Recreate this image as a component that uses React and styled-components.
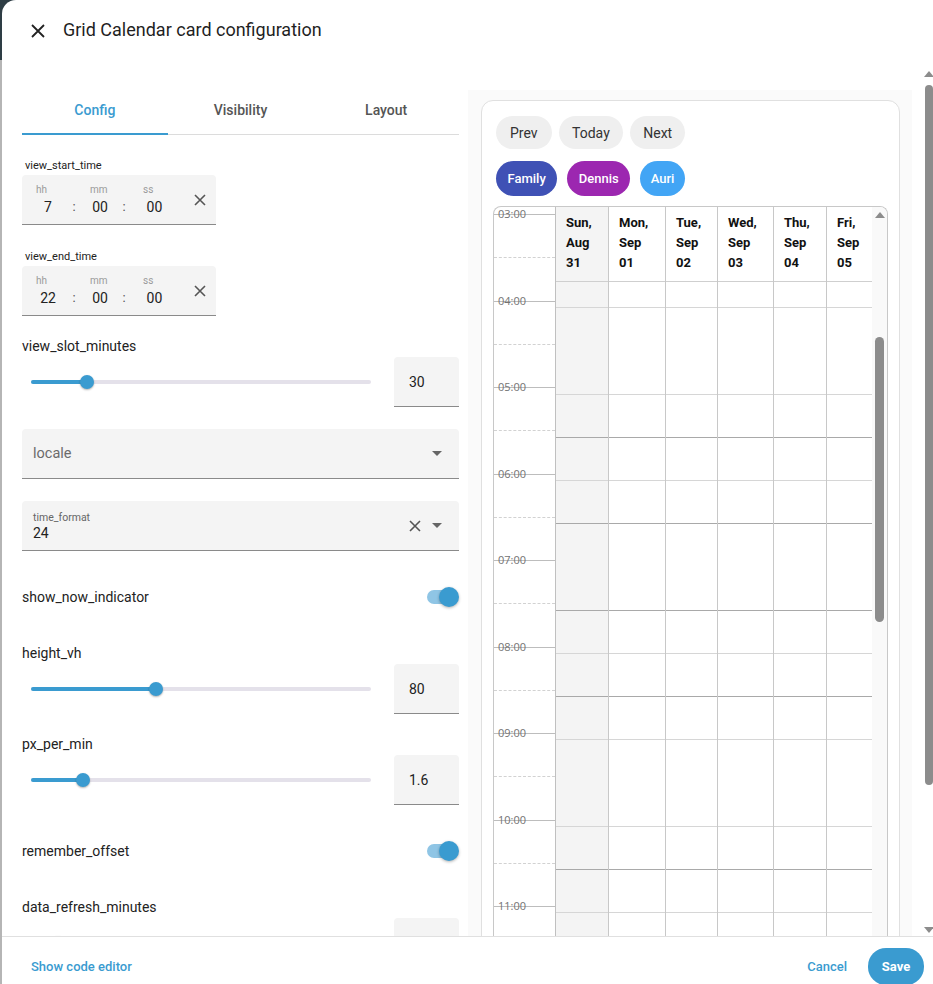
import { createGlobalStyle } from 'styled-components';
import styled from 'styled-components';

const primary = '#3a9bd0';

const GlobalStyle = createGlobalStyle`
  body {
    margin: 0;
    font-family: Roboto, 'Liberation Sans', sans-serif;
    background: linear-gradient(to bottom, #2e3d45 0, #2e3d45 60px, #b5b5b5 60px);
  }
  * { box-sizing: border-box; }
`;

const Dialog = styled.div`
  margin-left: 2px;
  height: 984px;
  background: #fff;
  border-top-left-radius: 14px;
  display: flex;
  flex-direction: column;
  overflow: hidden;
`;

const Header = styled.div`
  height: 62px;
  padding: 0 0 4px 29px;
  display: flex;
  align-items: center;
  flex-shrink: 0;
`;

const CloseIcon = styled.svg`
  margin-top: 4px;
  margin-right: 18px;
`;

const Title = styled.div`
  font-size: 18px;
  color: #1f1f1f;
`;

const Body = styled.div`
  flex: 1;
  display: flex;
  overflow: hidden;
  padding-left: 20px;
`;

const LeftPanel = styled.div`
  width: 437px;
  flex-shrink: 0;
  padding-top: 25px;
  display: flex;
  flex-direction: column;
  & > * {
    flex-shrink: 0;
  }
`;

const Tabs = styled.div`
  display: flex;
  height: 48px;
  border-bottom: 1px solid #dcdcdc;
`;

const Tab = styled.div`
  flex: 1;
  display: flex;
  align-items: center;
  justify-content: center;
  font-size: 14px;
  font-weight: 500;
  color: ${({ active }) => (active ? primary : '#555')};
  border-bottom: 2px solid ${({ active }) => (active ? primary : 'transparent')};
  margin-bottom: -1px;
`;

const SmallLabel = styled.div`
  font-size: 11px;
  line-height: 13px;
  color: #222;
  padding-left: 3px;
  margin-top: ${({ mt }) => mt}px;
`;

const Label = styled.div`
  font-size: 14px;
  line-height: 16px;
  color: #222;
  margin-top: ${({ mt }) => mt}px;
`;

const TimeBox = styled.div`
  width: 194px;
  height: 50px;
  margin-top: 3px;
  background: #f4f4f4;
  border-radius: 4px 4px 0 0;
  border-bottom: 1px solid #8a8a8a;
  display: flex;
  padding-left: 14px;
`;

const Segment = styled.div`
  width: ${({ w }) => w}px;
  padding-top: 9px;
  display: flex;
  flex-direction: column;
`;

const SegLabel = styled.div`
  font-size: 10px;
  line-height: 12px;
  color: #9a9a9a;
  padding-left: ${({ pl }) => pl || 0}px;
`;

const SegValue = styled.div`
  font-size: 14px;
  line-height: 16px;
  margin-top: 3px;
  color: #222;
  text-align: center;
`;

const Colon = styled.div`
  width: ${({ w }) => w}px;
  padding-top: 24px;
  font-size: 13px;
  line-height: 16px;
  color: #555;
  text-align: center;
`;

const ClearButton = styled.div`
  margin-left: auto;
  width: 32px;
  display: flex;
  align-items: center;
  justify-content: center;
`;

const SliderRow = styled.div`
  display: flex;
  align-items: center;
  height: 50px;
  margin-top: 3px;
`;

const Track = styled.div`
  position: relative;
  width: 340px;
  height: 4px;
  margin-left: 9px;
  border-radius: 2px;
  background: #e4e1ea;
`;

const Fill = styled.div`
  height: 100%;
  border-radius: 2px;
  background: ${primary};
`;

const Thumb = styled.div`
  position: absolute;
  top: -5px;
  width: 14px;
  height: 14px;
  margin-left: -7px;
  border-radius: 50%;
  background: ${primary};
  box-shadow: 0 1px 2px rgba(0, 0, 0, 0.3);
`;

const NumberBox = styled.div`
  margin-left: auto;
  width: 65px;
  height: 50px;
  background: #f4f4f4;
  border-radius: 4px 4px 0 0;
  border-bottom: 1px solid #8a8a8a;
  display: flex;
  align-items: center;
  padding-left: 15px;
  font-size: 14px;
  color: #222;
`;

const SelectBox = styled.div`
  height: 50px;
  margin-top: 22px;
  background: #f4f4f4;
  border-radius: 4px 4px 0 0;
  border-bottom: 1px solid #8a8a8a;
  display: flex;
  align-items: center;
  padding: 0 17px 0 11px;
`;

const Placeholder = styled.div`
  font-size: 14.5px;
  color: #6b6b6b;
`;

const SelectValue = styled.div`
  display: flex;
  flex-direction: column;
  padding-top: 2px;
`;

const SelectLabel = styled.div`
  font-size: 10.5px;
  line-height: 13px;
  color: #666;
`;

const SelectText = styled.div`
  font-size: 14px;
  line-height: 18px;
  color: #222;
`;

const SelectIcons = styled.div`
  margin-left: auto;
  display: flex;
  align-items: center;
  gap: 11px;
`;

const Caret = styled.div`
  width: 0;
  height: 0;
  border-left: 5px solid transparent;
  border-right: 5px solid transparent;
  border-top: 5px solid #666;
`;

const ToggleRow = styled.div`
  height: 40px;
  margin-top: 26px;
  display: flex;
  align-items: center;
  justify-content: space-between;
  font-size: 14px;
  color: #222;
`;

const Toggle = styled.div`
  position: relative;
  width: 33px;
  height: 20px;
  &::before {
    content: '';
    position: absolute;
    left: 1px;
    top: 3px;
    width: 28px;
    height: 14px;
    border-radius: 7px;
    background: #8fc5e5;
  }
  &::after {
    content: '';
    position: absolute;
    right: 0;
    top: 0;
    width: 20px;
    height: 20px;
    border-radius: 50%;
    background: ${primary};
    box-shadow: 0 1px 3px rgba(0, 0, 0, 0.3);
  }
`;

const RightPanel = styled.div`
  width: 444px;
  flex-shrink: 0;
  margin-left: 9px;
  margin-top: 28px;
  background: #fafafa;
  padding: 10px 12px 0 13px;
`;

const Card = styled.div`
  height: 1000px;
  background: #fff;
  border: 1px solid #e0e0e0;
  border-radius: 12px;
  padding: 15px 11px 0 11px;
`;

const Toolbar = styled.div`
  display: flex;
  gap: ${({ gap }) => gap}px;
  padding-left: 3px;
  margin-top: ${({ mt }) => mt || 0}px;
`;

const NavButton = styled.div`
  height: 33px;
  padding: 0 ${({ px }) => px}px;
  border-radius: 17px;
  background: #efefef;
  display: flex;
  align-items: center;
  font-size: 14px;
  color: #333;
`;

const Chip = styled.div`
  height: 35px;
  padding: 0 ${({ px }) => px}px;
  border-radius: 18px;
  background: ${({ color }) => color};
  display: flex;
  align-items: center;
  font-size: 13px;
  font-weight: 500;
  color: #fff;
`;

const Grid = styled.div`
  margin-top: 10px;
  height: 760px;
  border: 1px solid #c8c8c8;
  border-bottom: none;
  border-radius: 8px 8px 0 0;
  display: flex;
  overflow: hidden;
`;

const TimeCol = styled.div`
  width: 62px;
  flex-shrink: 0;
  padding-top: 7px;
  border-right: 1px solid #c0c0c0;
`;

const HourSlot = styled.div`
  position: relative;
  height: 86.5px;
  border-top: 1px solid #bdbdbd;
`;

const HalfLine = styled.div`
  margin-top: 42.25px;
  border-top: 1px dashed #d2d2d2;
`;

const HourLabel = styled.span`
  position: absolute;
  top: -8px;
  left: 4px;
  font-family: 'Open Sans', 'DejaVu Sans', sans-serif;
  font-size: 11px;
  line-height: 14px;
  color: #737373;
`;

const DayCol = styled.div`
  width: ${({ w }) => w}px;
  flex-shrink: 0;
  background: ${({ shade }) => (shade ? '#f4f4f4' : '#fff')};
  border-right: ${({ last }) => (last ? 'none' : '1px solid #c8c8c8')};
`;

const DayHead = styled.div`
  height: 75px;
  padding: 6px 0 0 10px;
  border-bottom: 1px solid #cfcfcf;
  font-size: 13px;
  font-weight: 700;
  line-height: 20px;
  color: #111;
`;

const Slot = styled.div`
  height: ${({ h }) => h}px;
  border-top: ${({ line }) => (line ? `1px solid ${line}` : 'none')};
`;

const InnerScroll = styled.div`
  width: 15px;
  flex-shrink: 0;
  background: #f9f9f9;
  display: flex;
  flex-direction: column;
  align-items: center;
  padding-top: 5px;
`;

const UpArrow = styled.div`
  width: 0;
  height: 0;
  border-left: 5px solid transparent;
  border-right: 5px solid transparent;
  border-bottom: 6px solid #8c8c8c;
`;

const ScrollThumb = styled.div`
  width: ${({ w }) => w}px;
  height: ${({ h }) => h}px;
  margin-top: ${({ mt }) => mt}px;
  border-radius: 5px;
  background: #8c8c8c;
`;

const OuterScroll = styled.div`
  margin-left: auto;
  width: 8px;
  flex-shrink: 0;
  display: flex;
  flex-direction: column;
  align-items: center;
  padding-top: 9px;
`;

const DownArrow = styled(UpArrow)`
  border-bottom: none;
  border-top: 6px solid #8c8c8c;
  margin-top: auto;
  margin-bottom: 3px;
`;

const Footer = styled.div`
  height: 48px;
  flex-shrink: 0;
  border-top: 1px solid #e0e0e0;
  display: flex;
  align-items: flex-start;
  padding: 11px 9px 0 29px;
  background: #fff;
`;

const TextButton = styled.div`
  height: 36px;
  display: flex;
  align-items: center;
  font-size: 13px;
  font-weight: 500;
  color: ${primary};
  margin-left: ${({ push }) => (push ? 'auto' : '0')};
`;

const SaveButton = styled.div`
  height: 37px;
  width: 56px;
  margin-left: 21px;
  border-radius: 18px;
  background: ${primary};
  display: flex;
  align-items: center;
  justify-content: center;
  font-size: 13px;
  font-weight: 700;
  color: #fff;
`;

const XIcon = ({ size = 12, color = '#555', width = 1.6 }) => (
  <svg width={size} height={size} viewBox="0 0 12 12">
    <path d="M1 1 L11 11 M11 1 L1 11" stroke={color} strokeWidth={width} fill="none" />
  </svg>
);

const TimeField = ({ label, mt, hh }) => (
  <>
    <SmallLabel mt={mt}>{label}</SmallLabel>
    <TimeBox>
      <Segment w={24}>
        <SegLabel>hh</SegLabel>
        <SegValue>{hh}</SegValue>
      </Segment>
      <Colon w={28}>:</Colon>
      <Segment w={24}>
        <SegLabel pl={2}>mm</SegLabel>
        <SegValue>00</SegValue>
      </Segment>
      <Colon w={24}>:</Colon>
      <Segment w={30}>
        <SegLabel pl={7}>ss</SegLabel>
        <SegValue>&nbsp;&nbsp;00</SegValue>
      </Segment>
      <ClearButton>
        <XIcon />
      </ClearButton>
    </TimeBox>
  </>
);

const SliderField = ({ label, mt, pct, value }) => (
  <>
    <Label mt={mt}>{label}</Label>
    <SliderRow>
      <Track>
        <Fill style={{ width: `${pct}%` }} />
        <Thumb style={{ left: `${pct}%` }} />
      </Track>
      <NumberBox>{value}</NumberBox>
    </SliderRow>
  </>
);

const days = [
  { w: 53, lines: ['Sun,', 'Aug', '31'], shade: true },
  { w: 57, lines: ['Mon,', 'Sep', '01'] },
  { w: 52, lines: ['Tue,', 'Sep', '02'] },
  { w: 56, lines: ['Wed,', 'Sep', '03'] },
  { w: 53, lines: ['Thu,', 'Sep', '04'] },
  { w: 45, lines: ['Fri,', 'Sep', '05'], last: true },
];

const L = '#d6d6d6';
const D = '#a9a9a9';
const slots = [
  [25, null], [87, L], [43, L], [43, D], [43, L], [87, D], [43, D],
  [43, L], [43, D], [87, L], [43, L], [43, D], [80, L],
];

const hours = ['03:00', '04:00', '05:00', '06:00', '07:00', '08:00', '09:00', '10:00', '11:00'];

const App = () => (
  <>
    <GlobalStyle />
    <Dialog>
      <Header>
        <CloseIcon width="14" height="14" viewBox="0 0 14 14">
          <path d="M1 1 L13 13 M13 1 L1 13" stroke="#222" strokeWidth="1.8" fill="none" />
        </CloseIcon>
        <Title>Grid Calendar card configuration</Title>
      </Header>
      <Body>
        <LeftPanel>
          <Tabs>
            <Tab active>Config</Tab>
            <Tab>Visibility</Tab>
            <Tab>Layout</Tab>
          </Tabs>
          <TimeField label="view_start_time" mt={24} hh="7" />
          <TimeField label="view_end_time" mt={25} hh="22" />
          <SliderField label="view_slot_minutes" mt={22} pct={16.5} value="30" />
          <SelectBox>
            <Placeholder>locale</Placeholder>
            <SelectIcons>
              <Caret />
            </SelectIcons>
          </SelectBox>
          <SelectBox>
            <SelectValue>
              <SelectLabel>time_format</SelectLabel>
              <SelectText>24</SelectText>
            </SelectValue>
            <SelectIcons>
              <XIcon size={12} color="#555" />
              <Caret />
            </SelectIcons>
          </SelectBox>
          <ToggleRow>
            show_now_indicator
            <Toggle />
          </ToggleRow>
          <SliderField label="height_vh" mt={28} pct={36.8} value="80" />
          <SliderField label="px_per_min" mt={22} pct={15.3} value="1.6" />
          <ToggleRow>
            remember_offset
            <Toggle />
          </ToggleRow>
          <SliderField label="data_refresh_minutes" mt={28} pct={8} value="" />
        </LeftPanel>
        <RightPanel>
          <Card>
            <Toolbar gap={7}>
              <NavButton px={14}>Prev</NavButton>
              <NavButton px={13.5}>Today</NavButton>
              <NavButton px={13}>Next</NavButton>
            </Toolbar>
            <Toolbar gap={10} mt={12}>
              <Chip color="#3f51b5" px={11.5}>Family</Chip>
              <Chip color="#9c27b0" px={11.5}>Dennis</Chip>
              <Chip color="#42a5f5" px={10.5}>Auri</Chip>
            </Toolbar>
            <Grid>
              <TimeCol>
                {hours.map((h) => (
                  <HourSlot key={h}>
                    <HourLabel>{h}</HourLabel>
                    <HalfLine />
                  </HourSlot>
                ))}
              </TimeCol>
              {days.map((d) => (
                <DayCol key={d.lines[2]} w={d.w} shade={d.shade} last={d.last}>
                  <DayHead>
                    {d.lines.map((l) => (
                      <div key={l}>{l}</div>
                    ))}
                  </DayHead>
                  {slots.map(([h, c], i) => (
                    <Slot key={i} h={h} line={c} />
                  ))}
                </DayCol>
              ))}
              <InnerScroll>
                <UpArrow />
                <ScrollThumb w={9} h={285} mt={119} />
              </InnerScroll>
            </Grid>
          </Card>
        </RightPanel>
        <OuterScroll>
          <UpArrow />
          <ScrollThumb w={8} h={700} mt={8} />
          <DownArrow />
        </OuterScroll>
      </Body>
      <Footer>
        <TextButton>Show code editor</TextButton>
        <TextButton push>Cancel</TextButton>
        <SaveButton>Save</SaveButton>
      </Footer>
    </Dialog>
  </>
);

export default App;
